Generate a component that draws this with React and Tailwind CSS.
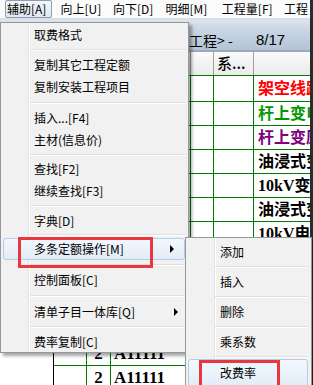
import React from "react";

const rows = [
  { name: "架空线路", cls: "text-[#ff0000]" },
  { name: "杆上变电", cls: "text-[#009900]" },
  { name: "杆上变压", cls: "text-[#800080]" },
  { name: "油浸式变", cls: "text-black" },
  { name: "10kV变电", cls: "text-black" },
  { name: "油浸式变", cls: "text-black" },
  { name: "10kV电缆", cls: "text-black" },
  { name: "电力电缆", cls: "text-black" },
  { name: "电缆终端", cls: "text-black" },
  { name: "低压开关", cls: "text-black" },
  { name: "接地装置", cls: "text-black" },
  { name: "避雷器安", cls: "text-black" },
  { name: "调试费用", cls: "text-black" },
];

function Arrow() {
  return (
    <svg width="5" height="8" viewBox="0 0 5 8" className="absolute right-[9px] top-1/2 -translate-y-1/2">
      <polygon points="0,0 4,4 0,8" fill="#000" />
    </svg>
  );
}

function Item({ children, h = "h-[22px]", arrow }) {
  return (
    <div className={`relative flex items-center pl-[33px] ${h} leading-none`}>
      {children}
      {arrow && <Arrow />}
    </div>
  );
}

function Sep({ h }) {
  return (
    <div className={`flex items-center ${h}`}>
      <div className="ml-[29px] mr-[2px] flex-1 border-t border-b border-t-[#e0e0e0] border-b-white" />
    </div>
  );
}

export default function App() {
  return (
    <div className="relative w-[313px] h-[385px] overflow-hidden bg-white font-[family-name:'Noto_Sans_CJK_SC','Noto_Sans',sans-serif] text-[12px] text-black">
      <div className="flex h-full">
        <div className="flex-1 flex flex-col min-w-0">
          {/* menu bar */}
          <div className="h-[22px] flex items-center bg-[#fbfbfb] border-b border-[#d9dde3] whitespace-nowrap">
            <div className="ml-[5px] w-[48px] h-[18px] flex items-center px-[1px] border border-[#8e9cb0] rounded-[2px] bg-gradient-to-b from-[#f4f7fb] to-[#dfe7f1]">辅助[A]</div>
            <div className="ml-[7px] w-[48px] h-[18px] flex items-center px-[1px] border border-transparent">向上[U]</div>
            <div className="ml-[6px] w-[48px] h-[18px] flex items-center px-[1px] border border-transparent">向下[D]</div>
            <div className="ml-[6px] w-[52px] h-[18px] flex items-center px-[1px] border border-transparent">明细[M]</div>
            <div className="ml-[6px] w-[58px] h-[18px] flex items-center px-[1px] border border-transparent">工程量[F]</div>
            <div className="ml-[6px] h-[18px] flex items-center px-[1px] border border-transparent">工程</div>
          </div>
          {/* title band */}
          <div className="h-[34px] flex pt-[11px] leading-[20px] text-[14px] whitespace-nowrap bg-gradient-to-b from-[#dce4ee] via-[#c4d1e0] to-[#b4c4d6] border-b-[2px] border-[#9aa8b8]">
            <span className="w-[189px] text-right">&lt;建筑</span>
            <span className="w-[67px]">工程&gt; -</span>
            <span className="font-[family-name:'Liberation_Sans',sans-serif] text-[15px]">8/17</span>
          </div>
          {/* header */}
          <div className="h-[24px] flex border-b border-[#007a00] bg-gradient-to-b from-[#fafafa] to-[#ebebeb] shrink-0">
            <div className="w-[54px] border-r border-[#a0a0a0]" />
            <div className="w-[33px] border-r border-[#a0a0a0]" />
            <div className="w-[24px] border-r border-[#a0a0a0]" />
            <div className="w-[80px] border-r border-[#a0a0a0]" />
            <div className="w-[23px] border-r border-[#a0a0a0]" />
            <div className="w-[40px] border-r border-[#a0a0a0] flex items-center pl-[3px] text-[15px] font-medium whitespace-nowrap">系...</div>
            <div className="flex-1" />
          </div>
          {/* grid rows */}
          {rows.map((r, i) => (
            <div key={i} className={`flex shrink-0 ${i === 0 ? "h-[26px]" : "h-[24px]"}`}>
              <div className="w-[54px] border-r border-[#000]" />
              <div className="w-[33px] border-r border-b border-[#007a00]" />
              <div className="w-[24px] border-r border-b border-[#007a00] flex items-center justify-center font-[family-name:'Liberation_Serif',serif] text-[17px] font-bold">2</div>
              <div className="w-[80px] border-r border-b border-[#007a00] flex items-center pl-[3px] font-[family-name:'Liberation_Serif',serif] text-[17px] font-bold">A11111</div>
              <div className="w-[23px] border-r border-b border-[#007a00]" />
              <div className="w-[40px] border-r border-b border-[#007a00]" />
              <div className={`flex-1 min-w-0 border-b border-[#007a00] flex items-center pl-[4px] overflow-hidden whitespace-nowrap text-[16px] font-bold font-[family-name:'Liberation_Serif','Noto_Sans_CJK_SC',serif] ${r.cls}`}>{r.name}</div>
            </div>
          ))}
        </div>
        <div className="w-[3px] bg-[#2b2b2b] shrink-0" />
      </div>

      {/* main dropdown menu */}
      <div className="absolute left-0 top-[22px] w-[189px] h-[331px] border border-[#979797] pt-[1px] bg-[linear-gradient(to_right,#f1f1f1_27px,#e2e3e3_27px,#e2e3e3_28px,#ffffff_28px,#ffffff_29px,#f1f1f1_29px)] shadow-[3px_3px_3px_rgba(0,0,0,0.35)] whitespace-nowrap">
        <Item>取费格式</Item>
        <Sep h="h-[8px]" />
        <Item>复制其它工程定额</Item>
        <Item>复制安装工程项目</Item>
        <Sep h="h-[9px]" />
        <Item>插入...[F4]</Item>
        <Item>主材(信息价)</Item>
        <Sep h="h-[7px]" />
        <Item>查找[F2]</Item>
        <Item>继续查找[F3]</Item>
        <Sep h="h-[8px]" />
        <Item>字典[D]</Item>
        <Sep h="h-[6px]" />
        <div className="relative ml-[2px] mr-[3px] h-[22px] flex items-center pl-[30px] leading-none rounded-[3px] border border-[#b6cde8] bg-gradient-to-b from-[#f3f8fd] to-[#e2ecf8]">
          多条定额操作[M]
          <Arrow />
        </div>
        <Sep h="h-[9px]" />
        <Item>控制面板[C]</Item>
        <Sep h="h-[10px]" />
        <Item h="h-[21px]" arrow>清单子目一体库[Q]</Item>
        <Sep h="h-[9px]" />
        <Item h="h-[21px]">费率复制[C]</Item>
        {/* red annotation box */}
        <div className="absolute left-[17px] top-[214px] w-[135px] h-[31px] border-[3px] border-[#e8383d]" />
      </div>

      {/* submenu */}
      <div className="absolute left-[185px] top-[237px] w-[127px] h-[160px] border border-[#979797] bg-[linear-gradient(to_right,#f1f1f1_28px,#e2e3e3_28px,#e2e3e3_29px,#ffffff_29px,#ffffff_30px,#f1f1f1_30px)] shadow-[3px_3px_3px_rgba(0,0,0,0.35)] whitespace-nowrap">
        <div className="h-[28px] flex items-center pl-[34px] leading-none">添加</div>
        <div className="ml-[29px] mr-[3px] border-t border-b border-t-[#e0e0e0] border-b-white" />
        <div className="h-[28px] flex items-center pl-[34px] leading-none">插入</div>
        <div className="ml-[29px] mr-[3px] border-t border-b border-t-[#e0e0e0] border-b-white" />
        <div className="h-[28px] flex items-center pl-[34px] leading-none">删除</div>
        <div className="ml-[29px] mr-[3px] border-t border-b border-t-[#e0e0e0] border-b-white" />
        <div className="h-[28px] flex items-center pl-[34px] leading-none">乘系数</div>
        <div className="ml-[29px] mr-[3px] border-t border-b border-t-[#e0e0e0] border-b-white" />
        <div className="mt-[1px] ml-[2px] mr-[3px] h-[28px] flex items-center pl-[31px] leading-none rounded-[3px] border border-[#b6cde8] bg-gradient-to-b from-[#f3f8fd] to-[#e2ecf8]">改费率</div>
        <div className="absolute left-[13px] top-[122px] w-[81px] h-[32px] border-[3px] border-[#e8383d]" />
      </div>
    </div>
  );
}
